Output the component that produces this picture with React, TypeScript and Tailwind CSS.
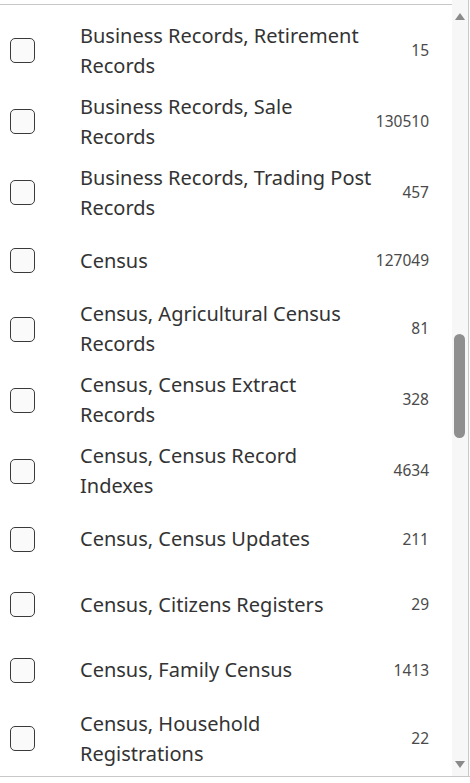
import React from "react";

interface RecordType {
  name: string;
  count: number;
}

const records: RecordType[] = [
  { name: "Business Records, Retirement Records", count: 15 },
  { name: "Business Records, Sale Records", count: 130510 },
  { name: "Business Records, Trading Post Records", count: 457 },
  { name: "Census", count: 127049 },
  { name: "Census, Agricultural Census Records", count: 81 },
  { name: "Census, Census Extract Records", count: 328 },
  { name: "Census, Census Record Indexes", count: 4634 },
  { name: "Census, Census Updates", count: 211 },
  { name: "Census, Citizens Registers", count: 29 },
  { name: "Census, Family Census", count: 1413 },
  { name: "Census, Household Registrations", count: 22 },
];

function RecordRow({ item }: { item: RecordType }) {
  return (
    <label className="flex items-center min-h-[65.5px] py-[5.5px] pl-[10px] pr-[23px] cursor-pointer">
      <input type="checkbox" className="peer sr-only" />
      <span className="shrink-0 w-[25px] h-[25px] rounded-[5px] border border-[#3a3a3a] bg-[#fafafa]" />
      <span className="flex-1 ml-[45px] text-[20px] leading-[30px] text-[#333]">
        {item.name}
      </span>
      <span className="shrink-0 ml-[30px] text-[15.5px] text-[#4a4a4a]">{item.count}</span>
    </label>
  );
}

function Scrollbar() {
  return (
    <div className="w-[17px] h-full bg-[#f7f7f7] border-r border-[#c8c8c8] flex flex-col items-center">
      <div className="h-[20px] w-full flex items-end justify-center pr-[1px]">
        <div className="w-0 h-0 border-l-[5px] border-r-[5px] border-b-[7px] border-l-transparent border-r-transparent border-b-[#8a8a8a]" />
      </div>
      <div className="flex-1 w-full flex flex-col items-center pr-[1px]">
        <div className="h-[314px]" />
        <div className="w-[11px] h-[104px] rounded-full bg-[#8f8f8f]" />
      </div>
      <div className="h-[15px] w-full flex items-start justify-center pr-[1px]">
        <div className="w-0 h-0 border-l-[5px] border-r-[5px] border-t-[7px] border-l-transparent border-r-transparent border-t-[#8a8a8a]" />
      </div>
    </div>
  );
}

export default function App() {
  return (
    <div className="w-[470px] h-[783px] bg-white" style={{ fontFamily: '"Noto Sans", "Open Sans", sans-serif' }}>
      <div className="flex h-[777px] border-b border-[#c8c8c8]">
        <div className="w-[452px] flex flex-col overflow-hidden">
          <div className="mt-[4px] border-t border-[#c8c8c8]" />
          <div className="pt-[10px]">
            {records.map((item) => (
              <RecordRow key={item.name} item={item} />
            ))}
          </div>
        </div>
        <Scrollbar />
      </div>
    </div>
  );
}
